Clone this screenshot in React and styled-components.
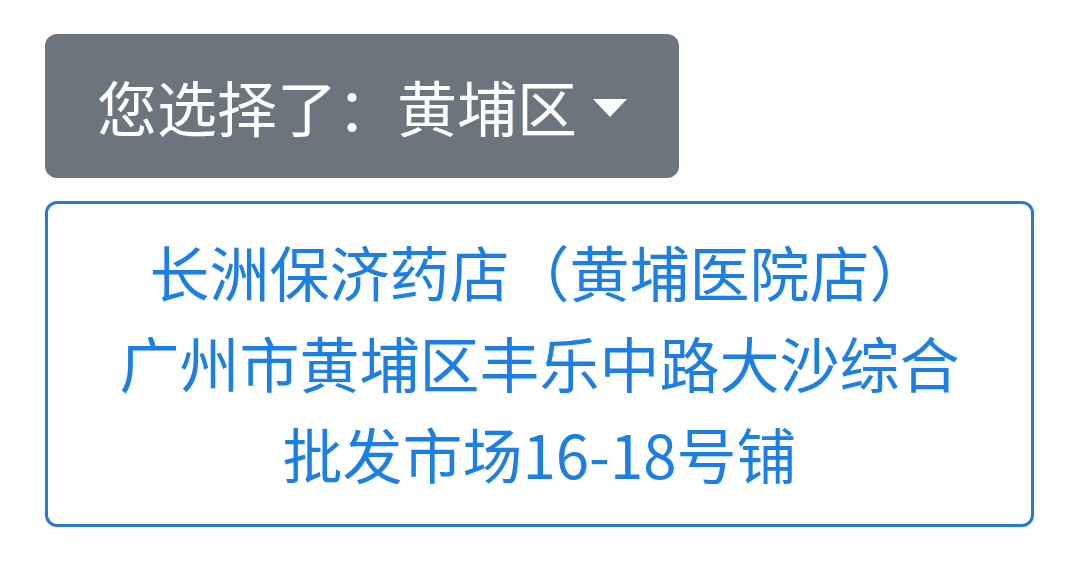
import styled, { createGlobalStyle } from "styled-components";

const Global = createGlobalStyle`
  body {
    margin: 0;
    background: #ffffff;
    font-family: "Noto Sans CJK SC", "Noto Sans", sans-serif;
  }
`;

const Page = styled.div`
  display: flex;
  flex-direction: column;
  align-items: flex-start;
  gap: 23px;
  padding: 34px 46px 0 45px;
`;

const Toggle = styled.button`
  display: inline-flex;
  align-items: center;
  height: 144px;
  padding: 0 52px 0 52px;
  border: 0;
  border-radius: 12px;
  background: #6c757d;
  color: #ffffff;
  font-family: inherit;
  font-size: 60px;
  line-height: 1.5;
  cursor: pointer;

  &::after {
    content: "";
    display: inline-block;
    margin-left: 16px;
    margin-top: 4px;
    border-top: 18px solid #ffffff;
    border-left: 17px solid transparent;
    border-right: 17px solid transparent;
  }
`;

const Card = styled.div`
  align-self: stretch;
  border: 3px solid #2a7ad4;
  border-radius: 12px;
  padding: 21px 20px 26px;
  text-align: center;
  color: #1b7fe3;
  font-size: 60px;
  line-height: 91px;
`;

const Line = styled.div``;

export default function App() {
  return (
    <>
      <Global />
      <Page>
        <Toggle>您选择了：黄埔区</Toggle>
        <Card>
          <Line>长洲保济药店（黄埔医院店）</Line>
          <Line>广州市黄埔区丰乐中路大沙综合</Line>
          <Line>批发市场16-18号铺</Line>
        </Card>
      </Page>
    </>
  );
}
